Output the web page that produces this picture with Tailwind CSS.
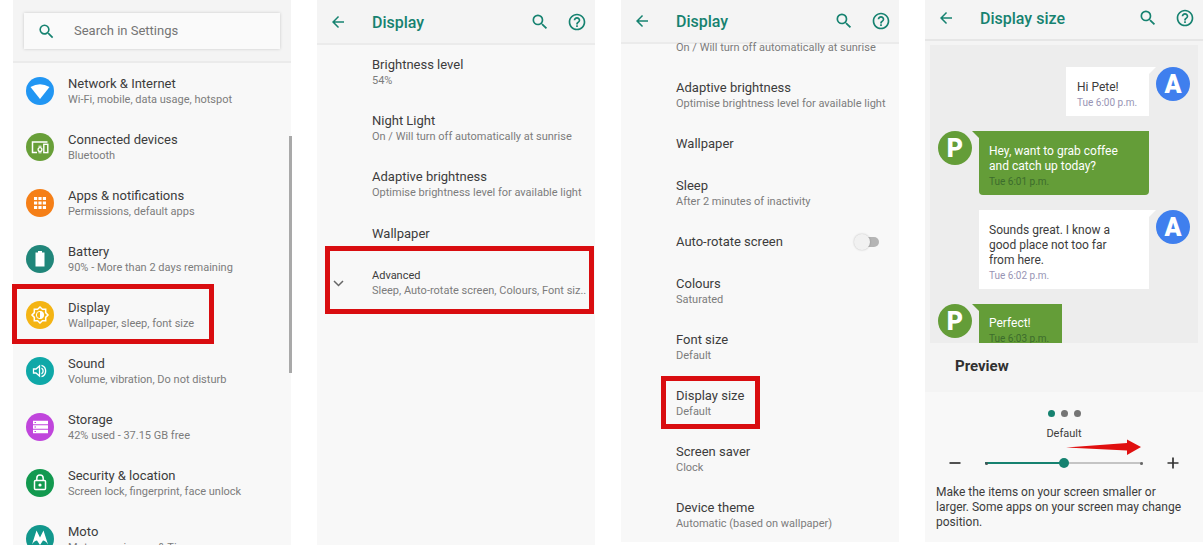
<!DOCTYPE html>
<html lang="en">
<head>
<meta charset="utf-8">
<meta name="viewport" content="width=device-width, initial-scale=1">
<title>Display settings guide</title>
<script src="https://cdn.jsdelivr.net/npm/@tailwindcss/browser@4"></script>
</head>
<body class="bg-white font-[Roboto,sans-serif] text-[#3c3c3c]">
<svg class="hidden" aria-hidden="true">
  <symbol id="search" viewBox="0 0 24 24"><path fill="currentColor" d="M15.5 14h-.79l-.28-.27A6.47 6.47 0 0 0 16 9.5 6.5 6.5 0 1 0 9.500 16c1.610 0 3.090-.59 4.230-1.570l.27.28v.79l5 4.990L20.490 19l-4.990-5zm-6 0C7.010 14 5 11.990 5 9.500S7.010 5 9.500 5 14 7.010 14 9.500 11.990 14 9.500 14z"/></symbol>
  <symbol id="back" viewBox="0 0 24 24"><path fill="currentColor" d="M20 11H7.830l5.590-5.590L12 4l-8 8 8 8 1.410-1.410L7.830 13H20v-2z"/></symbol>
  <symbol id="help" viewBox="0 0 24 24"><path fill="currentColor" d="M11 18h2v-2h-2v2zm1-16C6.480 2 2 6.480 2 12s4.480 10 10 10 10-4.480 10-10S17.520 2 12 2zm0 18c-4.410 0-8-3.590-8-8s3.590-8 8-8 8 3.590 8 8-3.590 8-8 8zm0-14c-2.210 0-4 1.790-4 4h2c0-1.100.9-2 2-2s2 .9 2 2c0 2-3 1.750-3 5h2c0-2.250 3-2.500 3-5 0-2.210-1.790-4-4-4z"/></symbol>
</svg>

<main class="grid h-screen grid-cols-4 grid-rows-[minmax(0,1fr)] gap-[26px] overflow-hidden pl-[13px]">

  <!-- Settings home -->
  <section class="relative min-w-0 bg-[#f8f8f8]" aria-label="Settings">
    <header class="flex h-[63px] flex-col border-b-2 border-[#ebebeb] bg-[#f4f4f4] px-[11px] pt-[13px]">
      <label class="flex h-9 items-center gap-[18px] bg-[#fafafa] pl-[13px] text-[#168270] shadow-[0_0_3px_#0000002e]">
        <svg class="size-[19px] shrink-0"><use href="#search"/></svg>
        <input type="search" aria-label="Search in Settings" placeholder="Search in Settings" class="w-full min-w-0 bg-transparent text-[13px] text-[#3c3c3c] outline-none placeholder:text-[#757575]">
      </label>
    </header>
    <ul>
      <li><a href="#" class="flex h-14 items-center gap-[14px] pl-[13px]">
        <svg class="size-7 shrink-0" viewBox="0 0 28 28"><circle cx="14" cy="14" r="14" fill="#2196f3"/><path d="M4.500 10Q14 4.500 23.500 10L14 22Z" fill="#fff"/></svg>
        <span class="flex min-w-0 flex-col pt-0.5 leading-4"><span class="text-[13px]">Network &amp; Internet</span><span class="text-[11px] text-[#7c7c7c]">Wi-Fi, mobile, data usage, hotspot</span></span></a></li>
      <li><a href="#" class="flex h-14 items-center gap-[14px] pl-[13px]">
        <svg class="size-7 shrink-0" viewBox="0 0 28 28"><circle cx="14" cy="14" r="14" fill="#689f38"/><path d="M11 19.500H6.500V9H21.500" fill="none" stroke="#fff" stroke-width="1.500"/><rect x="17.800" y="11.300" width="4" height="8.300" fill="none" stroke="#fff" stroke-width="1.400"/><circle cx="14" cy="16.500" r="1.900" fill="none" stroke="#fff" stroke-width="1.300"/><path d="M12.500 13.200h3M12.500 19.800h3" stroke="#fff"/></svg>
        <span class="flex min-w-0 flex-col pt-0.5 leading-4"><span class="text-[13px]">Connected devices</span><span class="text-[11px] text-[#7c7c7c]">Bluetooth</span></span></a></li>
      <li><a href="#" class="flex h-14 items-center gap-[14px] pl-[13px]">
        <svg class="size-7 shrink-0" viewBox="0 0 28 28"><circle cx="14" cy="14" r="14" fill="#f57f17"/><path d="M8 9.500h3.200m1.200 0h3.200m1.200 0H20M8 14h3.200m1.200 0h3.200m1.200 0H20M8 18.500h3.200m1.200 0h3.200m1.200 0H20" stroke="#fff" stroke-width="3.100"/></svg>
        <span class="flex min-w-0 flex-col pt-0.5 leading-4"><span class="text-[13px]">Apps &amp; notifications</span><span class="text-[11px] text-[#7c7c7c]">Permissions, default apps</span></span></a></li>
      <li><a href="#" class="flex h-14 items-center gap-[14px] pl-[13px]">
        <svg class="size-7 shrink-0" viewBox="0 0 28 28"><circle cx="14" cy="14" r="14" fill="#21867a"/><path d="M12 6h4v1.500h2.500V21.500h-9V7.500H12z" fill="#fff"/></svg>
        <span class="flex min-w-0 flex-col pt-0.5 leading-4"><span class="text-[13px]">Battery</span><span class="text-[11px] text-[#7c7c7c]">90% - More than 2 days remaining</span></span></a></li>
      <li class="relative"><a href="#" class="flex h-14 items-center gap-[14px] pl-[13px]">
        <svg class="size-7 shrink-0" viewBox="0 0 28 28"><circle cx="14" cy="14" r="14" fill="#f4b414"/><path d="M14 6l2.400 2.300h3.300v3.300L22 14l-2.300 2.400v3.300h-3.300L14 22l-2.400-2.300H8.300v-3.300L6 14l2.300-2.400V8.300h3.300z" fill="none" stroke="#fff" stroke-width="1.500"/><circle cx="14" cy="14" r="3.700" fill="none" stroke="#fff"/><path d="M14 10.300a3.700 3.700 0 0 1 0 7.400z" fill="#fff"/></svg>
        <span class="flex min-w-0 flex-col pt-0.5 leading-4"><span class="text-[13px]">Display</span><span class="text-[11px] text-[#7c7c7c]">Wallpaper, sleep, font size</span></span></a>
        <span class="pointer-events-none absolute -top-[3px] -left-px h-[60px] w-[202px] border-[5px] border-[#d90d10]"></span></li>
      <li><a href="#" class="flex h-14 items-center gap-[14px] pl-[13px]">
        <svg class="size-7 shrink-0" viewBox="0 0 28 28"><circle cx="14" cy="14" r="14" fill="#0fa8a8"/><path d="M7.500 12v4h2.500l3.500 3V9L10 12z" fill="none" stroke="#fff" stroke-width="1.300"/><path d="M15.500 11.200a3.200 3.200 0 0 1 0 5.600M15.500 8.300a6 6 0 0 1 0 11.400" fill="none" stroke="#fff" stroke-width="1.400"/></svg>
        <span class="flex min-w-0 flex-col pt-0.5 leading-4"><span class="text-[13px]">Sound</span><span class="text-[11px] text-[#7c7c7c]">Volume, vibration, Do not disturb</span></span></a></li>
      <li><a href="#" class="flex h-14 items-center gap-[14px] pl-[13px]">
        <svg class="size-7 shrink-0" viewBox="0 0 28 28"><circle cx="14" cy="14" r="14" fill="#c045dc"/><path d="M7 9.500h15M7 14h15M7 18.500h15" stroke="#fff" stroke-width="3.400"/><path d="M8.500 9.500h1.500M8.500 14h1.500M8.500 18.500h1.500" stroke="#c045dc" stroke-width="1.200"/></svg>
        <span class="flex min-w-0 flex-col pt-0.5 leading-4"><span class="text-[13px]">Storage</span><span class="text-[11px] text-[#7c7c7c]">42% used - 37.15 GB free</span></span></a></li>
      <li><a href="#" class="flex h-14 items-center gap-[14px] pl-[13px]">
        <svg class="size-7 shrink-0" viewBox="0 0 28 28"><circle cx="14" cy="14" r="14" fill="#12994f"/><rect x="8.500" y="11.500" width="11" height="9" rx="1" fill="none" stroke="#fff" stroke-width="1.500"/><path d="M10.800 11.500V9.200a3.200 3.200 0 0 1 6.400 0v2.300" fill="none" stroke="#fff" stroke-width="1.500"/><circle cx="14" cy="16" r="1.600" fill="#fff"/></svg>
        <span class="flex min-w-0 flex-col pt-0.5 leading-4"><span class="text-[13px]">Security &amp; location</span><span class="text-[11px] text-[#7c7c7c]">Screen lock, fingerprint, face unlock</span></span></a></li>
      <li><a href="#" class="flex h-14 items-center gap-[14px] pl-[13px]">
        <svg class="size-7 shrink-0" viewBox="0 0 28 28"><circle cx="14" cy="14" r="14" fill="#12978c"/><path d="M6 19.500L10.500 5.500 14 12.500 17.500 5.500 22 19.500C20.500 17 18.500 15.500 17 15.500L14 20 11 15.500C9.500 15.500 7.500 17 6 19.500Z" fill="#fff"/></svg>
        <span class="flex min-w-0 flex-col pt-0.5 leading-4"><span class="text-[13px]">Moto</span><span class="text-[11px] text-[#7c7c7c]">Moto experiences &amp; Tips</span></span></a></li>
    </ul>
    <div class="absolute top-[136px] -right-px h-[237px] w-[3px] bg-[#a9a9a9]"></div>
  </section>

  <!-- Display -->
  <section class="min-w-0 bg-[#f8f8f8]" aria-label="Display">
    <header class="flex h-[45px] items-center border-b-2 border-[#ebebeb] bg-[#f4f4f4] pr-2 pl-3 text-[#168270]">
      <button aria-label="Back" class="mr-[25px]"><svg class="size-[18px]"><use href="#back"/></svg></button>
      <h2 class="flex-1 pt-0.5 text-[16px] leading-5 font-medium">Display</h2>
      <button aria-label="Search" class="mr-[17px]"><svg class="size-[20px]"><use href="#search"/></svg></button>
      <button aria-label="Help"><svg class="size-[20px]"><use href="#help"/></svg></button>
    </header>
    <ul class="leading-4">
      <li><a href="#" class="flex h-14 flex-col justify-center pl-[55px]"><span class="text-[13px]">Brightness level</span><span class="text-[11px] text-[#7c7c7c]">54%</span></a></li>
      <li><a href="#" class="flex h-14 flex-col justify-center pl-[55px]"><span class="text-[13px]">Night Light</span><span class="text-[11px] text-[#7c7c7c]">On / Will turn off automatically at sunrise</span></a></li>
      <li><a href="#" class="flex h-14 flex-col justify-center pl-[55px]"><span class="text-[13px]">Adaptive brightness</span><span class="text-[11px] text-[#7c7c7c]">Optimise brightness level for available light</span></a></li>
      <li><a href="#" class="flex h-[42px] flex-col justify-center pl-[55px]"><span class="text-[13px]">Wallpaper</span></a></li>
      <li class="relative"><button class="flex h-14 w-full items-center pl-4 text-left">
        <svg class="mr-7 size-[11px] shrink-0" viewBox="0 0 11 11"><path d="M1 3l4.500 4.500L10 3" fill="none" stroke="#666" stroke-width="1.500"/></svg>
        <span class="flex min-w-0 flex-col leading-[15px]"><span class="text-[11px]">Advanced</span><span class="text-[11px] whitespace-nowrap text-[#7c7c7c]">Sleep, Auto-rotate screen, Colours, Font siz..</span></span></button>
        <span class="pointer-events-none absolute -top-[9px] right-px -bottom-[3px] left-2 border-[5px] border-[#d90d10]"></span></li>
    </ul>
  </section>

  <!-- Display, scrolled down -->
  <section class="mb-[3px] flex min-w-0 flex-col overflow-hidden bg-[#f8f8f8]" aria-label="Display, advanced">
    <header class="flex h-11 shrink-0 items-center border-b-2 border-[#ebebeb] bg-[#f4f4f4] pr-2 pl-3 text-[#168270]">
      <button aria-label="Back" class="mr-[25px]"><svg class="size-[18px]"><use href="#back"/></svg></button>
      <h2 class="flex-1 pt-0.5 text-[16px] leading-5 font-medium">Display</h2>
      <button aria-label="Search" class="mr-[17px]"><svg class="size-[20px]"><use href="#search"/></svg></button>
      <button aria-label="Help"><svg class="size-[20px]"><use href="#help"/></svg></button>
    </header>
    <ul class="-mt-1 leading-4">
      <li><a href="#" aria-label="Night Light" class="flex h-7 flex-col pl-[55px]"><span class="text-[11px] text-[#7c7c7c]">On / Will turn off automatically at sunrise</span></a></li>
      <li><a href="#" class="flex h-14 flex-col justify-center pl-[55px]"><span class="text-[13px]">Adaptive brightness</span><span class="text-[11px] text-[#7c7c7c]">Optimise brightness level for available light</span></a></li>
      <li><a href="#" class="flex h-[42px] flex-col justify-center pb-0.5 pl-[55px]"><span class="text-[13px]">Wallpaper</span></a></li>
      <li><a href="#" class="flex h-14 flex-col justify-center pl-[55px]"><span class="text-[13px]">Sleep</span><span class="text-[11px] text-[#7c7c7c]">After 2 minutes of inactivity</span></a></li>
      <li><label class="flex h-[42px] items-center justify-between pr-5 pb-0.5 pl-[55px]"><span class="text-[13px]">Auto-rotate screen</span>
        <input type="checkbox" role="switch" class="relative h-[10px] w-6 appearance-none rounded-full bg-[#b5b5b5] before:absolute before:-top-[3px] before:-left-px before:size-4 before:rounded-full before:bg-[#f1f1f1] before:shadow-[0_0_2px_#00000040] checked:before:left-2"></label></li>
      <li><a href="#" class="flex h-14 flex-col justify-center pl-[55px]"><span class="text-[13px]">Colours</span><span class="text-[11px] text-[#7c7c7c]">Saturated</span></a></li>
      <li><a href="#" class="flex h-14 flex-col justify-center pl-[55px]"><span class="text-[13px]">Font size</span><span class="text-[11px] text-[#7c7c7c]">Default</span></a></li>
      <li class="relative"><a href="#" class="flex h-14 flex-col justify-center pl-[55px]"><span class="text-[13px]">Display size</span><span class="text-[11px] text-[#7c7c7c]">Default</span></a>
        <span class="pointer-events-none absolute top-0 left-10 h-[53px] w-[99px] border-[5px] border-[#d90d10]"></span></li>
      <li><a href="#" class="flex h-14 flex-col justify-center pl-[55px]"><span class="text-[13px]">Screen saver</span><span class="text-[11px] text-[#7c7c7c]">Clock</span></a></li>
      <li><a href="#" class="flex h-14 flex-col justify-center pl-[55px]"><span class="text-[13px]">Device theme</span><span class="text-[11px] text-[#7c7c7c]">Automatic (based on wallpaper)</span></a></li>
    </ul>
  </section>

  <!-- Display size -->
  <section class="mb-[3px] flex min-w-0 flex-col bg-[#f8f8f8]" aria-label="Display size">
    <header class="flex h-[41px] shrink-0 items-center border-b-2 border-[#e6e6e6] bg-[#f4f4f4] pr-2 pb-1 pl-3 text-[#168270]">
      <button aria-label="Back" class="mr-[25px]"><svg class="size-[18px]"><use href="#back"/></svg></button>
      <h2 class="flex-1 pt-0.5 text-[16px] leading-5 font-medium">Display size</h2>
      <button aria-label="Search" class="mr-[17px]"><svg class="size-[20px]"><use href="#search"/></svg></button>
      <button aria-label="Help"><svg class="size-[20px]"><use href="#help"/></svg></button>
    </header>
    <div class="bg-[#f4f4f4] px-[5px] pt-1">
      <div class="flex h-[298px] flex-col gap-[15px] overflow-hidden bg-[#ededed] px-2 pt-[22px] text-[12px] leading-[15px]">
        <div class="flex justify-end">
          <div class="w-[83px] bg-white px-[11px] pt-[13px] pb-1.5"><p>Hi Pete!</p><p class="text-[10px] whitespace-nowrap text-[#9794b4]">Tue 6:00 p.m.</p></div>
          <span class="size-0 border-t-7 border-r-7 border-t-white border-r-transparent"></span>
          <span class="flex size-[34px] items-center justify-center rounded-full bg-[#3f7fee] text-[25px] font-black text-white">A</span>
        </div>
        <div class="flex">
          <span class="flex size-[34px] items-center justify-center rounded-full bg-[#649d38] text-[25px] font-black text-white">P</span>
          <span class="size-0 border-t-7 border-l-7 border-t-[#649d38] border-l-transparent"></span>
          <div class="w-[170px] rounded-b-sm bg-[#649d38] pt-[13px] pr-5 pb-1.5 pl-[10px] text-white"><p>Hey, want to grab coffee and catch up today?</p><p class="text-[10px] text-[#3c6c2c]">Tue 6:01 p.m.</p></div>
        </div>
        <div class="flex justify-end">
          <div class="w-[170px] bg-white pt-[13px] pr-5 pb-1.5 pl-[10px]"><p>Sounds great. I know a good place not too far from here.</p><p class="text-[10px] text-[#9794b4]">Tue 6:02 p.m.</p></div>
          <span class="size-0 border-t-7 border-r-7 border-t-white border-r-transparent"></span>
          <span class="flex size-[34px] items-center justify-center rounded-full bg-[#3f7fee] text-[25px] font-black text-white">A</span>
        </div>
        <div class="flex">
          <span class="flex size-[34px] items-center justify-center rounded-full bg-[#649d38] text-[25px] font-black text-white">P</span>
          <span class="size-0 border-t-7 border-l-7 border-t-[#649d38] border-l-transparent"></span>
          <div class="w-[83px] bg-[#649d38] px-[10px] pt-3 pb-[7px] text-white"><p>Perfect!</p><p class="text-[10px] whitespace-nowrap text-[#3c6c2c]">Tue 6:03 p.m.</p></div>
        </div>
      </div>
      <h3 class="flex h-[49px] items-center pb-0.5 pl-[25px] text-[15px] font-bold text-[#303030]">Preview</h3>
    </div>
    <div class="flex flex-col pt-[18px] pl-[11px]">
      <div class="flex justify-center gap-[6px] pr-[11px]"><span class="size-[7px] rounded-full bg-[#168270]"></span><span class="size-[7px] rounded-full bg-[#757575]"></span><span class="size-[7px] rounded-full bg-[#757575]"></span></div>
      <label for="size" class="mt-[9px] pr-[11px] text-center text-[11px] leading-4">Default</label>
      <div class="mt-[11px] flex h-5 items-center justify-between pr-6 pl-[13px]">
        <button aria-label="Smaller"><svg class="size-3" viewBox="0 0 12 12"><path d="M0.500 6h11" stroke="#333" stroke-width="1.700"/></svg></button>
        <div class="relative flex w-[158px]">
          <input id="size" type="range" min="0" max="2" value="1" class="h-[10px] w-full appearance-none bg-[linear-gradient(90deg,#168270_50%,#c4c4c4_50%)] bg-[length:100%_2px] bg-center bg-no-repeat [&::-webkit-slider-thumb]:size-[10px] [&::-webkit-slider-thumb]:appearance-none [&::-webkit-slider-thumb]:rounded-full [&::-webkit-slider-thumb]:bg-[#168270]">
          <span class="pointer-events-none absolute top-[4px] left-0 size-[3px] rounded-full bg-[#455]"></span>
          <span class="pointer-events-none absolute top-[4px] right-0 size-[3px] rounded-full bg-[#666]"></span>
          <svg class="pointer-events-none absolute -top-[19px] right-[2px] h-4 w-[75px]" viewBox="0 0 75 16"><path d="M0 8.500L61 4V0.500L75 8 61 16V11.500Z" fill="#e01010"/></svg>
        </div>
        <button aria-label="Larger"><svg class="size-3" viewBox="0 0 12 12"><path d="M0.500 6h11M6 .5v11" stroke="#333" stroke-width="1.700"/></svg></button>
      </div>
      <p class="mt-3 pr-4 text-[12px] leading-[15px]">Make the items on your screen smaller or larger. Some apps on your screen may change position.</p>
    </div>
  </section>
</main>
</body>
</html>
